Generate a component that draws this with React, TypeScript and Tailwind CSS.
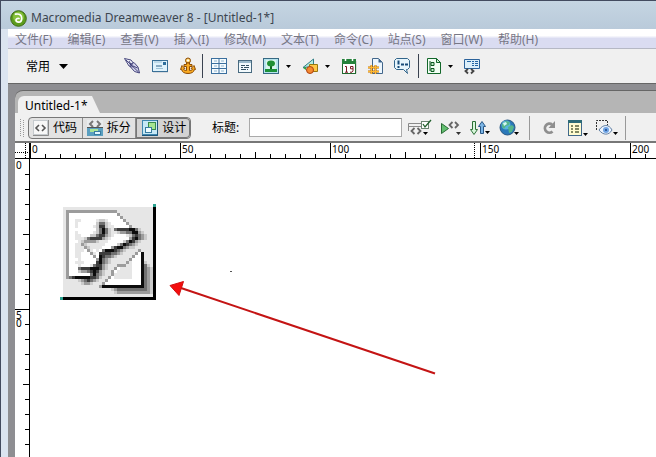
import type { ReactNode } from "react";

const menus = [
  "文件(F)",
  "编辑(E)",
  "查看(V)",
  "插入(I)",
  "修改(M)",
  "文本(T)",
  "命令(C)",
  "站点(S)",
  "窗口(W)",
  "帮助(H)",
];

const shades: Record<string, string> = {
  W: "#ffffff",
  l: "#cacaca",
  g: "#9c9c9c",
  m: "#707070",
  d: "#3c3c3c",
  k: "#0c0c0c",
};

// Broken image placeholder, one character per pixel
const torn = [
  "",
  ".ggggggggggggggggg",
  ".gWWWWWWWWWWWWWWWWg",
  ".gWWWWWWWWWWWWWWWWWg",
  ".gWW..WWWWW.ll.WWWWWg",
  ".gWW.WWWWWWlmml.WWWWWg",
  ".gWW.WWWWW.lddl..WWWWWg",
  ".gWWWWWWWWWlmkml.mddddkkml",
  ".gWW.WWWWW.lmkml..lggmmkkgl",
  ".gWW..WWWllmddgl.WWWW.lmdmgl",
  ".gWW...lmddddgl.WWWWWWgdkmgl",
  ".gWWW.lggggl...WWWWWlmkdgl",
  ".gWW..gl......WWWWlmkdmgl",
  ".gWW...gl....WWWgdkkmgll",
  ".gWW...Wg.W.Wmkkkdmgl",
  ".gWW..WWWg.Wddddmmgl",
  ".gWW..WWWWgWkdmmgl",
  ".gWWW.WWWWWgkmgl",
  ".gWW...WWWWdkmgl",
  ".gWWW.WWW.mddgl",
  ".gWWWmdddkkkdgl",
  ".gWWWlggmdkdgl",
  ".gWWWWWWWmkmgl",
  ".gmdkkkkkddml",
  ".....lgmdmgl",
  "......lggl",
];

const corner = [
  ".............g",
  "............gWk",
  "...........gWWk",
  "..........gWWWk",
  ".........g.WWWkl",
  "......ggg..WWWkml",
  ".....gW....WWWkmgl",
  "....gW.....WWWkmgl",
  "....g......WWWkmgl",
  "...gW......WWWkmgl",
  "..gWWWWWWWWWWWkmgl",
  ".gWWWWWWWWWWWWkmgl",
  "gkkkkkkkkkkkkkkmgl",
  "....lgmmmmmmmmmmgl",
  ".....lgggggggggggl",
];

function Sprite({ rows, left, top }: { rows: string[]; left: number; top: number }) {
  return (
    <>
      {rows.map((row, y) =>
        row.split("").map((c, x) =>
          shades[c] ? (
            <rect
              key={`${x}-${y}`}
              x={left + x}
              y={top + y}
              width={1}
              height={1}
              fill={shades[c]}
            />
          ) : null,
        ),
      )}
    </>
  );
}

function Icon({ w = 16, h = 18, children }: { w?: number; h?: number; children: ReactNode }) {
  return (
    <svg width={w} height={h} viewBox={`0 0 ${w} ${h}`} fill="none" aria-hidden="true" className="block shrink-0">
      {children}
    </svg>
  );
}

function Tool({ label, children }: { label: string; children: ReactNode }) {
  return (
    <button type="button" aria-label={label} className="flex items-center gap-1.5">
      {children}
    </button>
  );
}

function Caret() {
  return (
    <Icon w={5} h={3}>
      <path d="M0 0h5L2.500 3z" fill="#000" />
    </Icon>
  );
}

function Logo() {
  return (
    <Icon w={17} h={17}>
      <circle cx="8.500" cy="8.500" r="7.800" fill="#5c9c1e" stroke="#3c6a14" />
      <circle cx="8.500" cy="7" r="5.500" fill="#86c13c" />
      <path
        d="M5.500 4.200c4-.8 6.200.8 6.200 4 0 2.600-1.200 4-3 4s-2.700-.9-2.700-2.100 1.300-2 3-1.600"
        stroke="#fff"
        strokeWidth="1.700"
        strokeLinecap="round"
      />
    </Icon>
  );
}

function InsertBar() {
  return (
    <div className="flex h-[35px] shrink-0 items-center border-t border-[#b5b8c4] bg-[#f0f0f0] pl-[18px]">
      <div className="relative flex w-[98px] items-center">
        <select
          aria-label="插入类别"
          className="h-6 w-16 appearance-none bg-transparent pt-0.5 text-xs text-black outline-none"
        >
          <option>常用</option>
        </select>
        <span className="pointer-events-none absolute left-[33px]">
          <Icon w={9} h={5}>
            <path d="M0 0h9L4.500 5z" fill="#000" />
          </Icon>
        </span>
      </div>
      <div className="flex items-center gap-3">
        <Tool label="超级链接">
          <Icon>
            <g stroke="#34346f" strokeWidth=".9">
              <path d="M.5 1.500l6.500 1.500 3.500 4.500-.5 3.500-5-2z" fill="#efeffa" />
              <path d="M6 7.500l4-2 4 4.500 1.500 6-5-1.500-4-4.500z" fill="#d4d4ec" />
              <path d="M2 3l12.500 12M5 4l2.500 4.500M9 9l4.500 2M8 6.500v4" />
            </g>
          </Icon>
        </Tool>
        <Tool label="电子邮件链接">
          <Icon>
            <path d="M1 15h16V5" stroke="#b9c0c8" />
            <rect x=".5" y="3.500" width="15" height="11" fill="#dff2fb" stroke="#3a7097" />
            <path d="M2 5h8M4 11.500h7" stroke="#9bc0d6" />
            <rect x="11" y="5" width="3" height="3" fill="#2c6d9b" />
            <path d="M4 9h6" stroke="#32658a" />
          </Icon>
        </Tool>
        <Tool label="命名锚记">
          <Icon>
            <g stroke="#8d4c05">
              <circle cx="8" cy="3.500" r="2.500" fill="#ffd268" />
              <path
                d="M6.500 6h3v1.500h2.500v2h-2.500v4c2 0 3-.8 3-1.500l-1.500-.5 3-3 1.500 4-1-.3c-.5 3-3 4.300-6.500 4.300S2 15.200 1.500 12.200l-1 .3L2 8.500l3 3-1.500.5c0 .7 1 1.500 3 1.500v-4H4v-2h2.500z"
                fill="#f8aa23"
              />
            </g>
            <circle cx="8" cy="3.500" r="1" fill="#fff" />
          </Icon>
        </Tool>
      </div>
      <span className="ml-1.5 mr-2 h-6 w-px bg-[#3a4250]" />
      <div className="flex items-center gap-[11px]">
        <Tool label="表格">
          <Icon>
            <rect x=".5" y="1.500" width="15" height="15" fill="#f4fbfe" stroke="#3a6f9e" />
            <path d="M1 6.500h14M1 11.500h14M8 2v14" stroke="#3a6f9e" />
            <path d="M3 4h3M10 4h3M3 9h3M10 9h3M3 14h3M10 14h3" stroke="#8fb4cf" />
          </Icon>
        </Tool>
        <Tool label="插入 Div 标签">
          <Icon w={14}>
            <rect x=".5" y="3.500" width="13" height="12" fill="#f2fafd" stroke="#486a80" />
            <path d="M1 5h12" stroke="#9ab9ca" strokeWidth="2" />
            <path d="M3 8.500h4M8 8.500h3M3 10.500h2M6 10.500h5M3 12.500h5M9 12.500h1" stroke="#334f60" />
          </Icon>
        </Tool>
        <Tool label="图像">
          <Icon w={17}>
            <rect x=".5" y="1.500" width="15" height="15" fill="#b6e4ee" stroke="#376983" />
            <path d="M3 3h10v9H3z" fill="#d9f5ee" />
            <path d="M7 9h2v4H7z" fill="#10641e" />
            <ellipse cx="8" cy="6.500" rx="4" ry="3" fill="#209034" />
            <path d="M2 12h12v3H2z" fill="#1c9139" />
          </Icon>
          <Caret />
        </Tool>
        <Tool label="媒体">
          <Icon w={17}>
            <path d="M1 10.500L11.500 2v7.500z" fill="#b4ebe0" stroke="#317f86" />
            <path d="M1 11l3-1v3z" fill="#35a33a" />
            <path d="M7.500 7.500h8v7h-8z" fill="#ffc744" stroke="#98780e" />
            <circle cx="8" cy="13" r="3.500" fill="#f58a30" stroke="#ad4110" />
          </Icon>
          <Caret />
        </Tool>
        <Tool label="日期">
          <Icon>
            <path d="M3 16.500h12V4" stroke="#b9b9b9" />
            <rect x="1.500" y="2.500" width="13" height="14" fill="#fff" stroke="#20692e" />
            <path d="M1 2h14v5H1z" fill="#26823b" />
            <path d="M4.500 1v3M11.500 1v3" stroke="#fff" strokeWidth="1.500" />
            <path d="M4 9.500h1.500V15M4 15.200h3M12 11.800H9.500V9.500H12V14l-1 1.200H9" stroke="#7a1723" />
          </Icon>
        </Tool>
        <Tool label="服务器端包括">
          <Icon w={15}>
            <path d="M4.500 1.500h6l4 4v11h-10z" fill="#edf7ff" stroke="#42668a" />
            <path d="M10.500 1.500v4h4z" fill="#3f668d" />
            <path d="M3.500 8v9M7.500 8v9M0 10.500h11M0 14.500h11" stroke="#b56c0b" strokeWidth="2" />
            <path d="M3.500 8v9M7.500 8v9M0 10.500h11M0 14.500h11" stroke="#ffb82d" />
          </Icon>
        </Tool>
        <Tool label="注释">
          <Icon>
            <path
              d="M2.500 1.500h11l2 2v7l-2 2h-1l1 4-4-4h-7l-2-2v-7z"
              fill="#e6f5fc"
              stroke="#32658b"
            />
            <path d="M4.500 3.500v4M4.500 9v2M7 7.500h3M11 7.500h3" stroke="#174b79" strokeWidth="2" />
          </Icon>
        </Tool>
      </div>
      <span className="mx-2 h-6 w-px bg-[#3a4250]" />
      <div className="flex items-center gap-[11px]">
        <Tool label="模板">
          <Icon w={15}>
            <path d="M.5 1.500h9l4 4v11H.5z" fill="#f2fff4" stroke="#13672a" />
            <path d="M9.500 1.500v4h4z" fill="#cdeed3" stroke="#13672a" />
            <path d="M3 4v10" stroke="#0c5720" />
            <path d="M4 5.500h3v3H4zM4 11.500h3v3H4z" fill="#bdf0c7" stroke="#0c5720" />
          </Icon>
          <Caret />
        </Tool>
        <Tool label="标签选择器">
          <Icon w={17}>
            <path d="M.5 2.500h15v9h-15z" fill="#dceffa" stroke="#2b629a" />
            <path d="M3 4.500h4M8 4.500h2M11 4.500h3M8 6.500h2M11 6.500h3M8 8.500h2M11 8.500h3" stroke="#2465a4" />
            <path d="M4 12l-2.500 2L4 16.500M7 12l2.500 2L7 16.500" stroke="#444" strokeWidth="1.800" />
          </Icon>
        </Tool>
      </div>
    </div>
  );
}

function ViewButton({ label, active, children }: { label: string; active?: boolean; children: ReactNode }) {
  return (
    <button
      type="button"
      aria-pressed={!!active}
      className={
        active
          ? "flex items-center gap-1 rounded-r bg-[#d3d3d3] pl-1.5 inset-ring inset-ring-[#777]"
          : "flex items-center gap-1 border-r border-[#8b8b8b] pl-1"
      }
    >
      {children}
      <span>{label}</span>
    </button>
  );
}

function DocumentBar() {
  return (
    <div className="flex h-[30px] shrink-0 items-center border-b-2 border-[#777] bg-[#f0f0f0] pl-[5px] pt-px text-xs text-black">
      <Icon w={5} h={18}>
        <path d="M.5 0v18M3.500 1v17" stroke="#999" strokeDasharray="1 1" />
      </Icon>
      <div className="ml-[3px] grid h-[22px] w-[163px] grid-cols-3 rounded border border-[#777] bg-[#e2e2e2]">
        <ViewButton label="代码">
          <Icon w={16} h={16}>
            <rect width="16" height="16" fill="#c5cace" />
            <rect x="1" y="1" width="13" height="13" fill="#f7f7f7" />
            <path d="M15.500 0v15.500H0" stroke="#8c8c8c" />
            <path d="M6 5L3 8l3 3M9 5l3 3-3 3" stroke="#555" strokeWidth="1.600" />
          </Icon>
        </ViewButton>
        <ViewButton label="拆分">
          <Icon w={16} h={16}>
            <rect width="16" height="16" fill="#e9ecee" />
            <path d="M6 1L3 4l3 3M10 1l3 3-3 3" stroke="#777" strokeWidth="2" />
            <path d="M0 7.500h16" stroke="#555" />
            <rect y="8" width="16" height="8" fill="#5a9fc0" />
            <rect x="3" y="9" width="8" height="3" fill="#a9e496" />
            <rect x="7.500" y="11.500" width="6" height="3" fill="#e2f8ff" stroke="#387ba0" />
          </Icon>
        </ViewButton>
        <ViewButton label="设计" active>
          <Icon w={16} h={16}>
            <rect width="16" height="16" fill="#3e87b0" />
            <rect x="1" y="1" width="14" height="13" fill="#c6e8f5" />
            <path d="M15.500 0v15.500H0" stroke="#1e5579" />
            <rect x="6.500" y="2.500" width="7" height="7" fill="#a5e591" stroke="#3a8b4c" />
            <rect x="3.500" y="7.500" width="6" height="5" fill="#effcff" stroke="#387ba0" />
          </Icon>
        </ViewButton>
      </div>
      <label htmlFor="doc-title" className="ml-[21px] w-[37px] whitespace-nowrap">
        标题:
      </label>
      <input
        id="doc-title"
        type="text"
        className="h-[19px] w-[153px] border border-[#aaa] border-t-[#888] bg-white px-1 outline-none"
      />
      <div className="ml-1.5 flex items-center gap-2">
        <Tool label="浏览器检查">
          <Icon w={24}>
            <path d="M.5 12V4.500h13M1 7.500h13" stroke="#8a8a8a" />
            <path d="M6.500 9L3.500 12l3 3M9.500 9l3 3-3 3" stroke="#666" strokeWidth="1.800" />
            <rect x="13.500" y="2.500" width="7" height="7" fill="#fff" stroke="#6c8573" />
            <path d="M15 5l2 3 6-7" stroke="#21612d" strokeWidth="1.300" />
            <path d="M15 13h5l-2.500 3z" fill="#000" />
          </Icon>
        </Tool>
        <Tool label="验证标记">
          <Icon w={21}>
            <path d="M1.500 4.500l7 5-7 5z" fill="#63be70" stroke="#286b34" />
            <path d="M12.500 3l-3 3 3 3M15 3l3 3-3 3" stroke="#666" strokeWidth="1.800" />
            <path d="M16 13h5l-2.500 3z" fill="#333" />
          </Icon>
        </Tool>
        <Tool label="文件管理">
          <Icon w={22}>
            <path d="M3.500 2.500h3v8h2L5 15.500 1.500 10.500h2z" fill="#d9f7dc" stroke="#2c7136" />
            <path d="M11.500 14.500v-7h-2L13 2.500l3.500 5h-2v7z" fill="#7bb5e6" stroke="#285785" />
            <path d="M16 12h5l-2.500 3z" fill="#000" />
          </Icon>
        </Tool>
        <Tool label="在浏览器中预览/调试">
          <Icon w={22}>
            <circle cx="8.500" cy="8.500" r="7.500" fill="#2a78b9" stroke="#275782" />
            <circle cx="7" cy="6" r="4.500" fill="#58b5df" />
            <path d="M3 5l4-3 4 1-1 3-3 1-2 3-2-2zM9 8l4-2 2 2-2 5-3 1z" fill="#55b58b" />
            <path d="M4 4l3-1 1 2-3 2z" fill="#d5f8f5" />
            <path d="M15 13h5l-2.500 3z" fill="#000" />
          </Icon>
        </Tool>
      </div>
      <span className="ml-2 mr-3 h-6 w-px bg-[#999]" />
      <div className="flex items-center gap-2">
        <Tool label="刷新设计视图">
          <Icon w={18}>
            <path d="M10 5.500A4.500 4.500 0 1 0 10.500 12.500" stroke="#8e8e8e" strokeWidth="2.800" />
            <path d="M13 2v7H6.500z" fill="#8e8e8e" />
          </Icon>
        </Tool>
        <Tool label="视图选项">
          <Icon w={20}>
            <rect x=".5" y="1.500" width="13" height="15" fill="#fffcd0" stroke="#40688b" />
            <path d="M0 1h14v3H0z" fill="#2c6b77" />
            <path d="M3 7h2M3 10h2M3 13h2M7 7h4M7 10h4M7 13h4" stroke="#58633f" strokeWidth="1.500" />
            <path d="M15 14h5l-2.500 3z" fill="#000" />
          </Icon>
        </Tool>
        <Tool label="可视化助理">
          <Icon w={22}>
            <path d="M.5 11V1.500h11v5" stroke="#333" strokeDasharray="2 1" />
            <path d="M3 11c4-6 10-6 13 0-3 5.500-9 5.500-13 0z" fill="#eef5ff" stroke="#6280a3" />
            <circle cx="10" cy="11" r="3" fill="#6fa4e4" />
            <circle cx="10" cy="11" r="1" fill="#1d4584" />
            <path d="M17 13h5l-2.500 3z" fill="#000" />
          </Icon>
        </Tool>
      </div>
      <span className="ml-[7px] h-6 w-px bg-[#999]" />
    </div>
  );
}

function HorizontalRuler() {
  return (
    <div className="flex min-w-0 flex-1 overflow-hidden border-b border-black bg-white">
      {[0, 50, 100, 150, 200].map((n) => (
        <div key={n} className="relative w-[150px] shrink-0">
          <svg width="150" height="15" className="block" shapeRendering="crispEdges" aria-hidden="true">
            <path
              d="M.5 0v15M15.500 11v4M30.500 11v4M45.500 11v4M60.500 11v4M75.500 9v6M90.500 11v4M105.500 11v4M120.500 11v4M135.500 11v4"
              stroke="#000"
            />
            {n === 100 && <path d="M144.500 0v15" stroke="#000" strokeDasharray="1 1" />}
          </svg>
          <span className="absolute left-[2px] top-0 text-[10px] leading-3">{n}</span>
        </div>
      ))}
    </div>
  );
}

function VerticalRuler() {
  return (
    <div className="w-[15px] shrink-0 overflow-hidden border-r border-black bg-white">
      {["0", "50"].map((n) => (
        <div key={n} className="relative h-[150px]">
          <svg width="14" height="150" className="block" shapeRendering="crispEdges" aria-hidden="true">
            <path
              d={`${n === "0" ? "" : "M0 .5h14"}M10 15.500h4M10 30.500h4M10 45.500h4M10 60.500h4M8 75.500h6M10 90.500h4M10 105.500h4M10 120.500h4M10 135.500h4`}
              stroke="#000"
            />
          </svg>
          <span className="absolute left-[1px] top-[2px] w-[6px] break-all text-[10px] leading-[8px]">{n}</span>
        </div>
      ))}
    </div>
  );
}

function Canvas() {
  return (
    <div className="relative min-w-0 flex-1 overflow-hidden bg-white">
      <svg
        width="96"
        height="96"
        viewBox="-1 -1 32 32"
        shapeRendering="crispEdges"
        role="img"
        aria-label="图像占位符"
        className="absolute left-[30px] top-[45px]"
      >
        <rect width="30" height="30" fill="#e6e6e6" />
        <Sprite rows={torn} left={0} top={0} />
        <Sprite rows={corner} left={12} top={14} />
        <path d="M30 0h1v31H0v-1h30z" fill="#000" />
        <path d="M30-1h1v1h-1zM-1 30h1v1h-1z" fill="#2ba391" />
      </svg>
      <span className="absolute left-[200px] top-[112px] h-px w-[2px] bg-[#555]" />
      <svg
        width="270"
        height="96"
        fill="none"
        aria-hidden="true"
        className="absolute left-[139px] top-[120px]"
      >
        <path d="M12 9L266 94.500" stroke="#c41414" strokeWidth="2" />
        <path d="M1 6.500L14.500 2.500 10 16.500z" fill="#f40d0d" stroke="#d01010" />
      </svg>
    </div>
  );
}

export default function App() {
  return (
    <div className="flex h-screen flex-col overflow-hidden border-l border-t border-[#434b5f] bg-[#dbe4f0] font-['Noto_Sans','Noto_Sans_CJK_SC',sans-serif] text-black">
      <header className="flex h-7 shrink-0 items-center gap-1 bg-linear-to-b from-[#c5d5e2] to-[#b9cada] pl-[9px] pt-1.5">
        <Logo />
        <h1 className="whitespace-nowrap text-xs text-[#3c4650]">
          Macromedia Dreamweaver 8 - [Untitled-1*]
        </h1>
      </header>

      <div className="flex min-h-0 flex-1 flex-col pl-[7px]">
        <nav className="flex h-[19px] shrink-0 items-center gap-[15px] bg-linear-to-b from-white from-35% to-[#dadcf1] to-50% pl-[7px] pt-0.5 text-xs text-[#777785]">
          {menus.map((m) => (
            <button key={m} type="button" className="whitespace-nowrap">
              {m}
            </button>
          ))}
        </nav>

        <InsertBar />

        <div className="flex min-h-0 flex-1 flex-col border-t border-[#666] bg-[#8e8e92] pl-[7px] pt-[6px]">
          <div className="flex min-h-0 flex-1 flex-col rounded-tl-lg border-t border-[#666] bg-[#b5b5b5]">
            <div className="flex h-[22px] shrink-0 items-end pl-[3px]">
              <button
                type="button"
                className="h-[17px] w-[82px] rounded-tl-md bg-[#f0f0f0] pl-[7px] pt-0.5 text-left text-xs leading-4 [clip-path:polygon(0_0,74px_0,100%_100%,0_100%)]"
              >
                Untitled-1*
              </button>
            </div>

            <DocumentBar />

            <div className="flex h-4 shrink-0">
              <div className="w-[15px] border-b border-r border-black bg-white">
                <svg width="14" height="15" className="block" shapeRendering="crispEdges" aria-hidden="true">
                  <path d="M0 9.500h14M10.500 0v15" stroke="#000" strokeDasharray="1 1" />
                </svg>
              </div>
              <HorizontalRuler />
            </div>
            <div className="flex min-h-0 flex-1">
              <VerticalRuler />
              <Canvas />
            </div>
          </div>
        </div>
      </div>
    </div>
  );
}
